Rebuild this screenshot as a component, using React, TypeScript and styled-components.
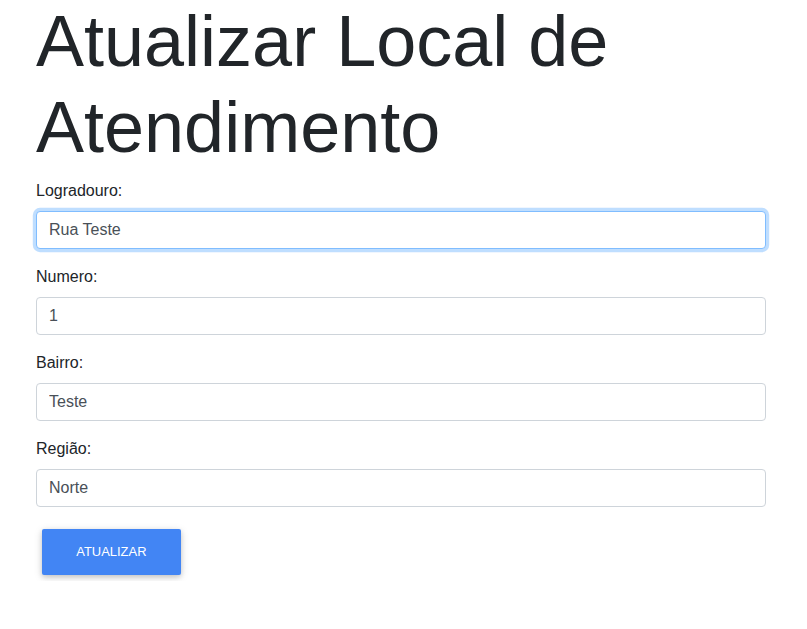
import React, { useEffect, useRef } from "react";
import styled, { createGlobalStyle } from "styled-components";

const GlobalStyle = createGlobalStyle`
  html, body {
    margin: 0;
    padding: 0;
    background: #ffffff;
  }
  body {
    font-family: "Liberation Sans", Arial, Helvetica, sans-serif;
    font-size: 16px;
    line-height: 1.5;
    color: #212529;
  }
  * { box-sizing: border-box; }
`;

const Page = styled.div`
  width: 730px;
  margin-left: 36px;
`;

const Title = styled.h1`
  margin: -2px 0 8px;
  font-size: 72px;
  font-weight: 400;
  line-height: 1.2;
  color: #212529;
`;

const Form = styled.form`
  display: flex;
  flex-direction: column;
`;

const Group = styled.div`
  display: flex;
  flex-direction: column;
  margin-bottom: 16px;
`;

const Label = styled.label`
  display: block;
  margin-bottom: 8px;
  font-size: 16px;
  line-height: 24px;
  color: #212529;
`;

const Input = styled.input<{ $focused?: boolean }>`
  display: block;
  width: 100%;
  height: 38px;
  padding: 6px 12px;
  font-family: "Liberation Sans", Arial, Helvetica, sans-serif;
  font-size: 16px;
  line-height: 24px;
  color: #495057;
  background: #ffffff;
  border: 1px solid ${(p) => (p.$focused ? "#80bdff" : "#ced4da")};
  border-radius: 4px;
  outline: 0;
  box-shadow: ${(p) => (p.$focused ? "0 0 0 3.2px rgba(0, 123, 255, 0.25)" : "none")};
  caret-color: #212529;
`;

const ButtonRow = styled.div`
  display: flex;
`;

const Button = styled.button`
  margin: 6px;
  padding: 13.44px 34.24px;
  font-family: "Liberation Sans", Arial, Helvetica, sans-serif;
  font-size: 12.96px;
  line-height: 1.5;
  text-transform: uppercase;
  color: #ffffff;
  background: #4285f4;
  border: 0;
  border-radius: 2px;
  box-shadow: 0 2px 5px 0 rgba(0, 0, 0, 0.16), 0 2px 10px 0 rgba(0, 0, 0, 0.12);
  cursor: pointer;
`;

const fields = [
  { id: "logradouro", label: "Logradouro:", value: "Rua Teste" },
  { id: "numero", label: "Numero:", value: "1" },
  { id: "bairro", label: "Bairro:", value: "Teste" },
  { id: "regiao", label: "Região:", value: "Norte" },
];

export default function App() {
  const firstRef = useRef<HTMLInputElement>(null);

  useEffect(() => {
    const el = firstRef.current;
    if (el) {
      el.focus();
      const len = el.value.length;
      el.setSelectionRange(len, len);
    }
  }, []);

  return (
    <>
      <GlobalStyle />
      <Page>
        <Title>Atualizar Local de Atendimento</Title>
        <Form onSubmit={(e) => e.preventDefault()}>
          {fields.map((f, i) => (
            <Group key={f.id}>
              <Label htmlFor={f.id}>{f.label}</Label>
              <Input
                id={f.id}
                ref={i === 0 ? firstRef : undefined}
                defaultValue={f.value}
                $focused={i === 0}
              />
            </Group>
          ))}
          <ButtonRow>
            <Button type="submit">Atualizar</Button>
          </ButtonRow>
        </Form>
      </Page>
    </>
  );
}
